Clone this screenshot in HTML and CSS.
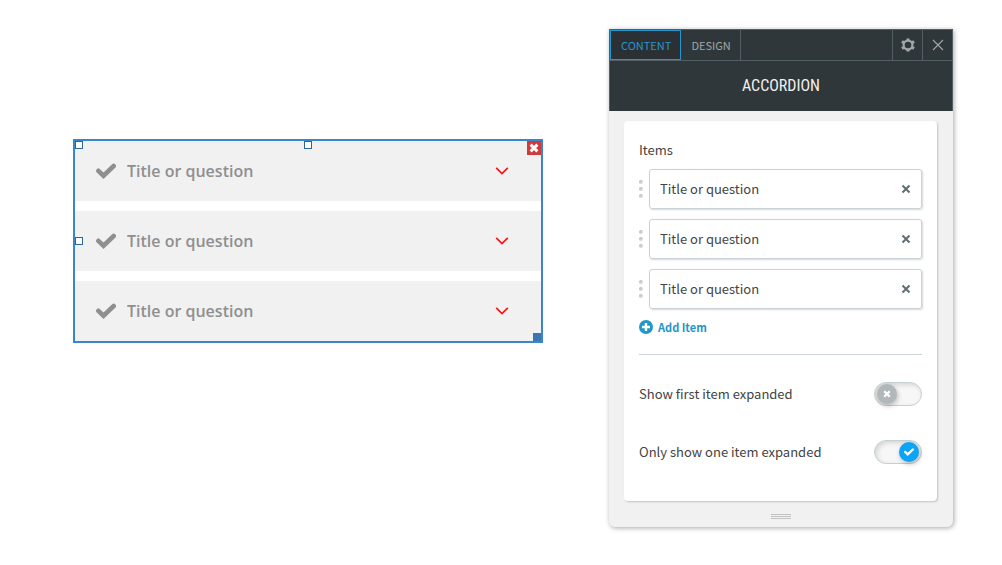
FILE: index.html
```
<!DOCTYPE html>
<html lang="en">
<head>
<meta charset="utf-8">
<title>Accordion</title>
<meta name="viewport" content="width=device-width, initial-scale=1.0">
<link rel="stylesheet" href="styles.css">
</head>
<body>

<!-- shared icons -->
<svg class="sprite" aria-hidden="true">
  <symbol id="tick" viewBox="0 0 20 16"><path d="M2.400 7.800L7.500 12.700L17.700 3" fill="none" stroke="currentColor" stroke-width="4.600" stroke-linecap="round"/></symbol>
  <symbol id="chevron" viewBox="0 0 14 8"><path d="M1.200 .8L7 6.600L12.800 .8" fill="none" stroke="currentColor" stroke-width="1.700"/></symbol>
  <symbol id="cross" viewBox="0 0 10 10"><path d="M1.500 1.500l7 7M8.500 1.500l-7 7" fill="none" stroke="currentColor" stroke-width="2"/></symbol>
  <symbol id="fat-cross" viewBox="0 0 10 10"><path d="M1.600 1.600l6.800 6.800M8.400 1.600L1.600 8.400" fill="none" stroke="currentColor" stroke-width="2.900"/></symbol>
</svg>

<main class="editor">
  <section class="widget">
    <button class="bar"><svg class="bar-tick"><use href="#tick"/></svg><span class="bar-title">Title or question</span><svg class="bar-arrow"><use href="#chevron"/></svg></button>
    <button class="bar"><svg class="bar-tick"><use href="#tick"/></svg><span class="bar-title">Title or question</span><svg class="bar-arrow"><use href="#chevron"/></svg></button>
    <button class="bar"><svg class="bar-tick"><use href="#tick"/></svg><span class="bar-title">Title or question</span><svg class="bar-arrow"><use href="#chevron"/></svg></button>
    <span class="handle handle-corner"></span>
    <span class="handle handle-top"></span>
    <span class="handle handle-left"></span>
    <span class="handle handle-resize"></span>
    <button class="widget-delete" aria-label="Delete"><svg><use href="#fat-cross"/></svg></button>
  </section>

  <aside class="panel">
    <header class="panel-head">
      <nav class="tabs">
        <button class="tab active">CONTENT</button>
        <button class="tab">DESIGN</button>
        <span class="tab-space"></span>
        <button class="tool" aria-label="Settings">
          <svg width="14" height="14" viewBox="0 0 14 14">
            <circle cx="7" cy="7" r="4.400" fill="none" stroke="currentColor" stroke-width="2.200"/>
            <path d="M7 .5v2.500M7 11v2.500M.9 3.500l2.600 1.500M10.500 9l2.600 1.500M.9 10.500L3.500 9M10.500 5l2.600-1.500" stroke="currentColor" stroke-width="3"/>
          </svg>
        </button>
        <button class="tool" aria-label="Close">
          <svg width="12" height="12" viewBox="0 0 12 12"><path d="M1 1l10 10M11 1L1 11" stroke="currentColor" stroke-width="1.100"/></svg>
        </button>
      </nav>
      <h1 class="panel-title">ACCORDION</h1>
    </header>

    <div class="card">
      <h2 class="card-label">Items</h2>
      <ul class="items">
        <li class="item">
          <span class="grip"><i></i><i></i><i></i></span>
          <div class="field">
            <input type="text" value="Title or question" aria-label="Item 1">
            <button class="remove" aria-label="Remove"><svg><use href="#cross"/></svg></button>
          </div>
        </li>
        <li class="item">
          <span class="grip"><i></i><i></i><i></i></span>
          <div class="field">
            <input type="text" value="Title or question" aria-label="Item 2">
            <button class="remove" aria-label="Remove"><svg><use href="#cross"/></svg></button>
          </div>
        </li>
        <li class="item">
          <span class="grip"><i></i><i></i><i></i></span>
          <div class="field">
            <input type="text" value="Title or question" aria-label="Item 3">
            <button class="remove" aria-label="Remove"><svg><use href="#cross"/></svg></button>
          </div>
        </li>
      </ul>
      <button class="add">
        <svg width="14" height="14" viewBox="0 0 14 14"><circle cx="7" cy="7" r="7" fill="currentColor"/><path d="M7 3v8M3 7h8" stroke="#fff" stroke-width="2.400"/></svg>
        Add Item
      </button>
      <hr class="line">
      <div class="option">
        <label for="first-open">Show first item expanded</label>
        <span class="switch">
          <input type="checkbox" id="first-open">
          <span class="knob"><svg width="8" height="8"><use href="#fat-cross"/></svg></span>
        </span>
      </div>
      <div class="option">
        <label for="only-one">Only show one item expanded</label>
        <span class="switch">
          <input type="checkbox" id="only-one" checked>
          <span class="knob"><svg width="10" height="8"><use href="#tick"/></svg></span>
        </span>
      </div>
    </div>

    <div class="resizer"><i></i><i></i><i></i></div>
  </aside>
</main>

</body>
</html>
```

FILE: styles.css
```
* {
  box-sizing: border-box;
}

body {
  margin: 0;
  background: #fff;
  color: #434343;
  font-family: "Noto Sans CJK JP", "Open Sans", sans-serif;
  font-size: 13px;
}

button {
  margin: 0;
  padding: 0;
  border: 0;
  background: none;
  color: inherit;
  font: inherit;
  cursor: pointer;
}

svg {
  display: block;
  flex: none;
}

.sprite {
  position: absolute;
  width: 0;
  height: 0;
}

.editor {
  display: flex;
  align-items: flex-start;
  gap: 66px;
  padding: 29px 49px 29px 73px;
}

/* selected accordion on the page */
.widget {
  position: relative;
  flex: 1;
  display: flex;
  flex-direction: column;
  gap: 10px;
  margin-top: 110px;
  border: 2px solid #3986cd;
}

.bar {
  display: flex;
  align-items: center;
  height: 60px;
  padding: 0 32px 0 21px;
  background: #f1f1f1;
  color: #8f8f8f;
  font: 600 16px/24px "Open Sans", "Noto Sans", sans-serif;
  text-align: left;
}

.bar-tick {
  width: 20px;
  height: 16px;
}

.bar-title {
  flex: 1;
  padding-left: 11px;
}

.bar-arrow {
  width: 14px;
  height: 8px;
  color: #fa1414;
}

.handle {
  position: absolute;
  width: 8px;
  height: 8px;
  border: 1px solid #2a66a0;
  background: #fff;
}

.handle-corner {
  top: 0;
  left: 0;
}

.handle-top {
  top: 0;
  left: calc(50% - 4px);
}

.handle-left {
  top: calc(50% - 4px);
  left: 0;
}

.handle-resize {
  right: 0;
  bottom: 0;
  border: 0;
  background: #3b77b5;
}

.widget-delete {
  position: absolute;
  top: 0;
  right: 0;
  display: grid;
  place-items: center;
  width: 14px;
  height: 14px;
  background: #d23939;
  color: #fff;
}

.widget-delete svg {
  width: 10px;
  height: 10px;
}

/* settings panel */
.panel {
  width: 344px;
  background: #f1f1f1;
  border-radius: 0 0 6px 6px;
  box-shadow: 1px 1px 5px rgba(0, 0, 0, .35);
}

.panel-head {
  border: 1px solid #525f64;
  border-bottom: 0;
  background: #30373a;
}

.tabs {
  display: flex;
  height: 31px;
  border-bottom: 1px solid #525f64;
  color: #a0a8ab;
}

.tab {
  padding: 0 9px 0 10px;
  border-right: 1px solid #525f64;
  font-size: 11px;
}

.tab.active {
  border: 1px solid #2196d3;
  background: #2a3033;
  color: #2a94cb;
}

.tab-space {
  flex: 1;
}

.tool {
  display: grid;
  place-items: center;
  width: 30px;
  border-left: 1px solid #525f64;
}

.panel-title {
  margin: 0;
  color: #f1f1f1;
  font: 400 16px/50px "Roboto Condensed", "Liberation Sans Narrow", Roboto, sans-serif;
  text-align: center;
}

.card {
  margin: 10px 16px 0 15px;
  padding: 15px 15px 20px;
  border-radius: 4px;
  background: #fff;
  box-shadow: 1px 1px 2px rgba(0, 0, 0, .2);
}

.card-label {
  margin: 0 0 5px;
  font-size: 13px;
  font-weight: 400;
  line-height: 28px;
}

.items {
  display: flex;
  flex-direction: column;
  gap: 10px;
  margin: 0;
  padding: 0;
  list-style: none;
}

.item {
  display: flex;
  align-items: center;
  gap: 6px;
}

.grip {
  display: grid;
  gap: 3px;
}

.grip i {
  width: 4px;
  height: 4px;
  border-radius: 2px;
  background: linear-gradient(135deg, #b4b4b4, #e6e6e6);
}

.field {
  flex: 1;
  display: flex;
  height: 40px;
  border: 1px solid #c9d3d6;
  border-radius: 3px;
  box-shadow: 1px 1px 2px rgba(0, 0, 0, .16);
}

.field input {
  flex: 1;
  min-width: 0;
  padding: 0 0 2px 10px;
  border: 0;
  outline: 0;
  background: none;
  color: inherit;
  font: inherit;
}

.remove {
  display: grid;
  place-items: center;
  width: 30px;
  color: #5f6e73;
}

.remove svg {
  width: 10px;
  height: 10px;
}

.add {
  display: flex;
  align-items: center;
  gap: 5px;
  height: 24px;
  margin-top: 6px;
  color: #2196cb;
  font-size: 11px;
  font-weight: 700;
}

.line {
  height: 1px;
  margin: 15px 0 10px;
  border: 0;
  background: #cdd5d8;
}

.option {
  display: flex;
  align-items: center;
  justify-content: space-between;
  height: 58px;
}

.option label {
  padding-bottom: 2px;
}

.switch {
  position: relative;
  width: 48px;
  height: 24px;
}

.switch input {
  appearance: none;
  display: block;
  width: 48px;
  height: 24px;
  margin: 0;
  border: 1px solid #c6cfd2;
  border-radius: 12px;
  background: #f7f7f7;
  box-shadow: inset 2px 2px 5px rgba(0, 0, 0, .14);
}

.knob {
  position: absolute;
  top: 2px;
  left: 3px;
  display: grid;
  place-items: center;
  width: 20px;
  height: 20px;
  border-radius: 50%;
  background: #b0b8ba;
  box-shadow: 1px 2px 5px rgba(0, 0, 0, .25);
  color: #fff;
  pointer-events: none;
}

.switch input:checked + .knob {
  left: 25px;
  background: #0ca5f5;
}

.resizer {
  display: grid;
  justify-content: center;
  gap: 1px;
  padding: 13px 0 8px;
}

.resizer i {
  width: 20px;
  height: 1px;
  background: #c3c3c3;
}
```
